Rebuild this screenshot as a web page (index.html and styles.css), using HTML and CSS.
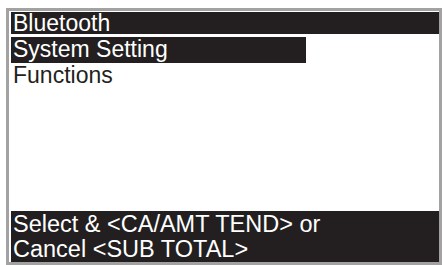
FILE: index.html
```html
<!DOCTYPE html>
<html>
<head>
<meta charset="utf-8">
<link rel="stylesheet" href="styles.css">
</head>
<body>
<div class="screen">
  <div class="title">Bluetooth</div>
  <div class="item selected">System Setting</div>
  <div class="item">Functions</div>
  <div class="footer">
    <div class="line">Select &amp; &lt;CA/AMT TEND&gt; or</div>
    <div class="line">Cancel &lt;SUB TOTAL&gt;</div>
  </div>
</div>
</body>
</html>
```
FILE: styles.css
```css
html, body {
  margin: 0;
  padding: 0;
  background: #ffffff;
}
body {
  width: 443px;
  height: 265px;
  overflow: hidden;
  font-family: "Liberation Sans", Arial, sans-serif;
  font-size: 23px;
  color: #231f20;
}
.screen {
  box-sizing: border-box;
  margin: 8px 0 0 6px;
  width: 436px;
  height: 257px;
  border: 3px solid #a2a2a2;
  padding: 1px 0 0 2px;
  display: flex;
  flex-direction: column;
  background: #ffffff;
}
.title {
  height: 22px;
  line-height: 22px;
  background: #231f20;
  color: #ffffff;
  padding-left: 2px;
  white-space: nowrap;
}
.item {
  height: 24px;
  line-height: 24px;
  padding-left: 2px;
  white-space: nowrap;
}
.item.selected {
  margin-top: 3px;
  width: 295px;
  box-sizing: border-box;
  height: 26px;
  line-height: 25px;
  background: #231f20;
  color: #ffffff;
}
.footer {
  margin-top: auto;
  background: #231f20;
  color: #ffffff;
  padding: 1px 0 0 2px;
  height: 51px;
  box-sizing: border-box;
  font-size: 23.5px;
}
.line {
  height: 25px;
  line-height: 25px;
  white-space: nowrap;
}
```
